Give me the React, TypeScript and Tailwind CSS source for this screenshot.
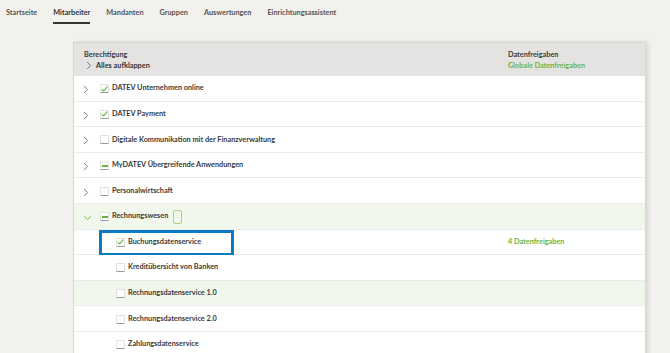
type CheckState = "checked" | "mixed" | "empty";

interface Row {
  label: string;
  state: CheckState;
  level: 0 | 1;
  expanded?: boolean;
  tint?: boolean;
  focus?: boolean;
  selected?: boolean;
  share?: string;
}

const tabs = ["Startseite", "Mitarbeiter", "Mandanten", "Gruppen", "Auswertungen", "Einrichtungsassistent"];

const rows: Row[] = [
  { label: "DATEV Unternehmen online", state: "checked", level: 0 },
  { label: "DATEV Payment", state: "checked", level: 0 },
  { label: "Digitale Kommunikation mit der Finanzverwaltung", state: "empty", level: 0 },
  { label: "MyDATEV Übergreifende Anwendungen", state: "mixed", level: 0 },
  { label: "Personalwirtschaft", state: "empty", level: 0 },
  { label: "Rechnungswesen", state: "mixed", level: 0, expanded: true, tint: true, focus: true },
  { label: "Buchungsdatenservice", state: "checked", level: 1, selected: true, share: "4 Datenfreigaben" },
  { label: "Kreditübersicht von Banken", state: "empty", level: 1 },
  { label: "Rechnungsdatenservice 1.0", state: "empty", level: 1, tint: true },
  { label: "Rechnungsdatenservice 2.0", state: "empty", level: 1 },
  { label: "Zahlungsdatenservice", state: "empty", level: 1 },
];

function Chevron({ open }: { open?: boolean }) {
  return open ? (
    <svg width="9" height="6" viewBox="0 0 9 6">
      <path d="M1 1.2 L4.5 4.6 L8 1.2" fill="none" stroke="#6db33f" strokeWidth="0.9" />
    </svg>
  ) : (
    <svg width="6" height="9" viewBox="0 0 6 9">
      <path d="M1.2 1 L4.6 4.5 L1.2 8" fill="none" stroke="#6a6a6a" strokeWidth="0.9" />
    </svg>
  );
}

function Checkbox({ state }: { state: CheckState }) {
  return (
    <div className="w-[9px] h-[9px] bg-white border border-[#e2e2e2] border-b-[#9a9a9a] rounded-[1px] flex items-center justify-center shrink-0">
      {state === "checked" && (
        <svg width="8" height="8" viewBox="0 0 8 8">
          <path d="M1 4.2 L3 6.3 L7.2 1.4" fill="none" stroke="#6db33f" strokeWidth="1.3" />
        </svg>
      )}
      {state === "mixed" && <div className="w-[6px] h-[2px] bg-[#6db33f]" />}
    </div>
  );
}

function TreeRow({ row }: { row: Row }) {
  return (
    <div
      className={`relative h-[25.6px] flex items-center border-b border-[#ebebeb] ${row.tint ? "bg-[#f1f7ea]" : "bg-white"}`}
    >
      <div className="w-[26px] pl-[9px] flex items-center shrink-0 pt-[3px]">
        {row.level === 0 && <Chevron open={row.expanded} />}
      </div>
      <div className={`flex items-center gap-[3px] pt-[1px] ${row.level === 1 ? "ml-[16px]" : ""}`}>
        <Checkbox state={row.state} />
        <span className="text-[7.3px] font-bold text-[#3a3a3a]">{row.label}</span>
        {row.focus && <div className="ml-[2px] w-[9px] h-[14px] border border-[#a7d37f] rounded-[2px]" />}
      </div>
      {row.share && (
        <span className="absolute left-[434px] pt-[1px] text-[7.3px] font-bold text-[#6db33f]">{row.share}</span>
      )}
      {row.selected && (
        <div className="absolute left-[25px] top-[0px] w-[135px] h-[26px] border-[3px] border-[#0a7bc2] pointer-events-none" />
      )}
    </div>
  );
}

export default function App() {
  return (
    <div className="w-[670px] h-[353px] overflow-hidden bg-[#f2f1ee] font-['Lato',sans-serif]">
      <div className="flex gap-[16px] pl-[6px] pt-[7px] h-[42px]">
        {tabs.map((t) => (
          <div key={t} className="flex flex-col">
            <span className={`text-[7.3px] font-bold leading-[12px] ${t === "Mitarbeiter" ? "text-[#333]" : "text-[#555]"}`}>{t}</span>
            {t === "Mitarbeiter" && <div className="mt-[3px] h-[2px] bg-[#333]" />}
          </div>
        ))}
      </div>
      <div className="ml-[73px] w-[572px] bg-white border-l border-t border-[#d6d6d6] shadow-[3px_0_4px_rgba(0,0,0,0.12)]">
        <div className="h-[33px] bg-[#e4e3e1] flex pt-[6px] pl-[10px]">
          <div className="w-[424px] flex flex-col">
            <span className="text-[7.3px] font-bold leading-[11px] text-[#3a3a3a]">Berechtigung</span>
            <div className="flex items-center gap-[4px] pl-[2px]">
              <Chevron />
              <span className="text-[7.3px] font-bold leading-[11px] text-[#333]">Alles aufklappen</span>
            </div>
          </div>
          <div className="flex flex-col">
            <span className="text-[7.3px] font-bold leading-[11px] text-[#3a3a3a]">Datenfreigaben</span>
            <span className="text-[7.3px] font-bold leading-[11px] text-[#6db33f]">Globale Datenfreigaben</span>
          </div>
        </div>
        {rows.map((r) => (
          <TreeRow key={r.label} row={r} />
        ))}
      </div>
    </div>
  );
}
